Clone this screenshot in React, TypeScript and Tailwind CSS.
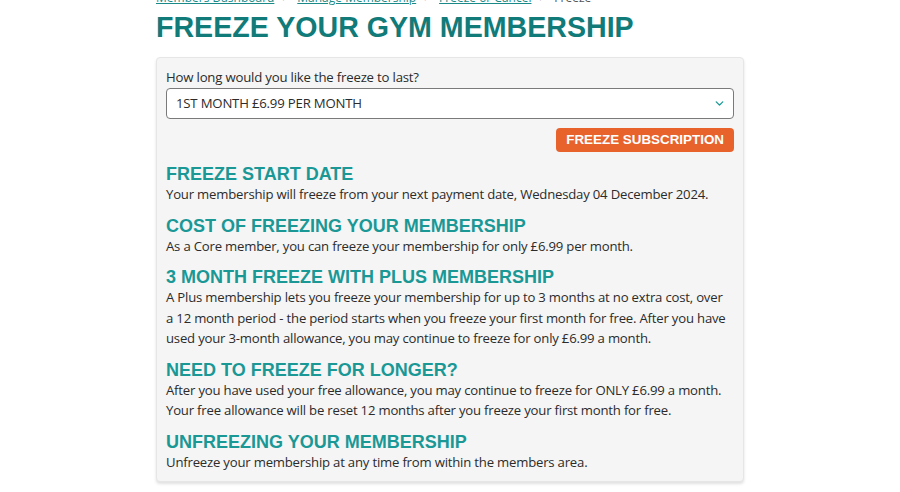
import { ChevronDown } from "lucide-react";

const sections = [
  {
    title: "Freeze start date",
    body: "Your membership will freeze from your next payment date, Wednesday 04 December 2024.",
  },
  {
    title: "Cost of freezing your membership",
    body: "As a Core member, you can freeze your membership for only £6.99 per month.",
  },
  {
    title: "3 month freeze with Plus membership",
    body: "A Plus membership lets you freeze your membership for up to 3 months at no extra cost, over a\u00a012 month period - the period starts when you freeze your first month for free. After you have used your 3-month allowance, you may continue to freeze for only £6.99 a month.",
  },
  {
    title: "Need to freeze for longer?",
    body: "After you have used your free allowance, you may continue to freeze for ONLY £6.99 a month. Your free allowance will be reset 12 months after you freeze your first month for free.",
  },
  {
    title: "Unfreezing your membership",
    body: "Unfreeze your membership at any time from within the members area.",
  },
];

const crumbs = ["Members Dashboard", "Manage Membership", "Freeze or Cancel"];

const App = () => {
  return (
    <div className="min-h-screen bg-white overflow-hidden">
      <div className="mx-auto w-[588px]">
        {/* Breadcrumbs */}
        <nav className="-mt-[9px] flex items-center gap-2 text-[12px] leading-[14px] text-[#555] font-['Open_Sans',sans-serif]">
          {crumbs.map((c) => (
            <span key={c} className="flex items-center gap-2">
              <a href="#" className="text-[#1a8a88] underline">{c}</a>
              <span>&gt;</span>
            </span>
          ))}
          <span>Freeze</span>
        </nav>

        <h1 className="mt-[5px] text-[28.6px] leading-[34px] font-bold text-[#117b79] font-['Liberation_Sans',Arial,sans-serif]">
          FREEZE YOUR GYM MEMBERSHIP
        </h1>

        {/* Freeze form */}
        <div className="mt-[13px] rounded-[4px] border border-[#e6e6e6] bg-[#f5f5f5] px-[9px] pt-[9px] pb-[9px] shadow-[0_2px_3px_rgba(0,0,0,0.12)] font-['Open_Sans',sans-serif] text-[#2b2b2b]">
          <label className="block text-[13.2px] leading-[20px] tracking-[-0.2px]">
            How long would you like the freeze to last?
          </label>
          <div className="relative mt-[1px]">
            <select className="block h-[31px] w-full appearance-none rounded-[4px] border border-[#7a7a7a] bg-white pl-[9px] pr-8 text-[13.2px] tracking-[-0.2px] text-[#2b2b2b]">
              <option>1ST MONTH £6.99 PER MONTH</option>
              <option>2 MONTHS £13.98</option>
            </select>
            <ChevronDown className="pointer-events-none absolute right-[8px] top-[9px] h-[13px] w-[13px] text-[#1a9a96]" strokeWidth={2.5} />
          </div>
          <div className="mt-[9px] flex justify-end">
            <button className="h-[24px] rounded-[4px] bg-[#e8622c] px-[10px] text-[13.4px] font-bold text-white font-['Liberation_Sans',Arial,sans-serif]">
              FREEZE SUBSCRIPTION
            </button>
          </div>

          <div className="mt-[13px] flex flex-col gap-[12px]">
            {sections.map((s) => (
              <section key={s.title}>
                <h2 className="text-[18px] leading-[19px] font-bold uppercase text-[#1a9896] font-['Liberation_Sans',Arial,sans-serif]">
                  {s.title}
                </h2>
                <p className="text-[13.15px] leading-[20.5px] tracking-[-0.2px]">{s.body}</p>
              </section>
            ))}
          </div>
        </div>
      </div>
    </div>
  );
};

export default App;
